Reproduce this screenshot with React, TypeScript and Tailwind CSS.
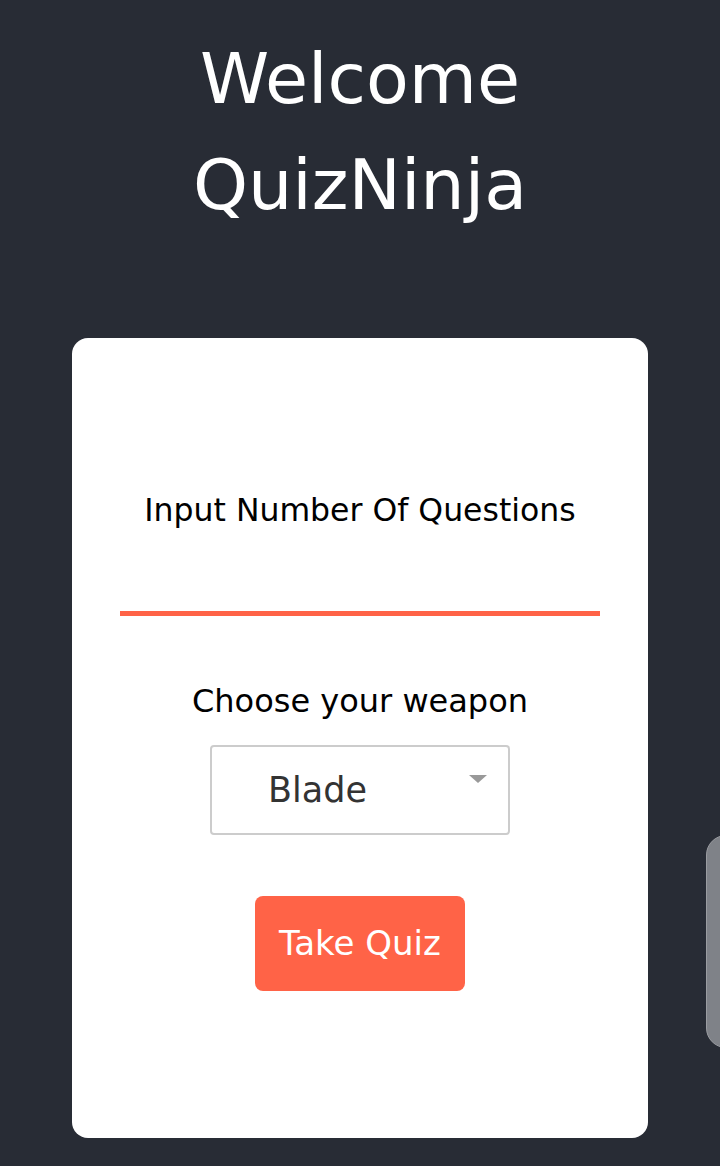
export default function App() {
  return (
    <div
      className="relative min-h-[1166px] bg-[#282c35] overflow-hidden"
      style={{ fontFamily: '"DejaVu Sans", "Noto Sans", sans-serif' }}
    >
      <h1 className="pt-[26px] text-center text-[70px] leading-[106px] font-normal text-white">
        Welcome
        <br />
        QuizNinja
      </h1>

      <div className="mx-[72px] mt-[100px] h-[800px] rounded-2xl bg-white flex flex-col items-center">
        <label className="mt-[152px] text-[31.5px] leading-[40px] text-black">
          Input Number Of Questions
        </label>
        <input
          type="number"
          className="mt-[36px] w-[480px] h-[50px] border-0 border-b-[5px] border-[#ff6347] outline-none bg-transparent text-center text-[28px]"
        />
        <p className="mt-[65px] text-[32px] leading-[40px] text-black">Choose your weapon</p>
        <div className="relative mt-[24px] w-[300px] h-[90px] rounded-[4px] border-2 border-[#cccccc] flex items-center pl-[56px]">
          <span className="text-[35px] leading-[40px] text-[#333333]">Blade</span>
          <span className="absolute right-[21px] top-[28px] w-0 h-0 border-l-[9px] border-r-[9px] border-t-[8px] border-l-transparent border-r-transparent border-t-[#999999]" />
        </div>
        <button className="mt-[61px] w-[210px] h-[95px] rounded-lg bg-[#ff6347] text-white text-[34px]">
          Take Quiz
        </button>
      </div>

      <div className="absolute left-[706px] top-[835px] w-[40px] h-[213px] rounded-[22px] bg-[#7f8288] border border-[#9a9ca1]" />
    </div>
  );
}
